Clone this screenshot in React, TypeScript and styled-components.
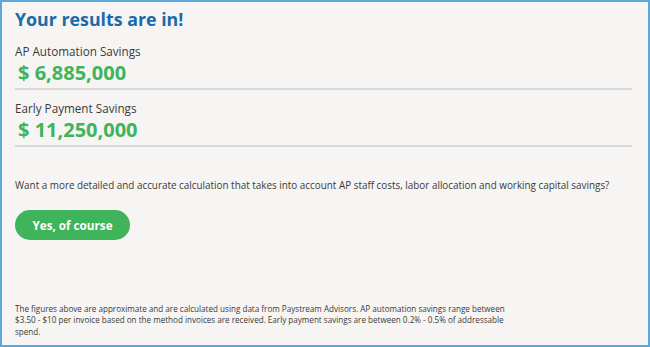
import styled, { createGlobalStyle } from "styled-components";

const colors = {
  FRAME: "#5aa8dc",
  BG: "#f6f5f3",
  TITLE: "#1b6aab",
  GREEN: "#3fb45a",
  TEXT: "#3a3a3a",
  RULE: "#d9d9d9",
};

const savings = [
  { label: "AP Automation Savings", amount: "$ 6,885,000" },
  { label: "Early Payment Savings", amount: "$ 11,250,000" },
];

const App = () => {
  return (
    <>
      <GlobalStyle />
      <Frame>
        <Title>Your results are in!</Title>
        {savings.map(item => (
          <SavingsRow key={item.label}>
            <SavingsLabel>{item.label}</SavingsLabel>
            <SavingsAmount>{item.amount}</SavingsAmount>
          </SavingsRow>
        ))}
        <Prompt>
          Want a more detailed and accurate calculation that takes into account AP staff costs, labor
          allocation and working capital savings?
        </Prompt>
        <CtaButton type="button">Yes, of course</CtaButton>
        <Footnote>
          The figures above are approximate and are calculated using data from Paystream Advisors. AP
          automation savings range between $3.50 - $10 per invoice based on the method invoices are
          received. Early payment savings are between 0.2% - 0.5% of addressable spend.
        </Footnote>
      </Frame>
    </>
  );
};

export default App;

const GlobalStyle = createGlobalStyle`
  html, body {
    margin: 0;
    padding: 0;
    background: ${colors.BG};
  }
  body {
    font-family: "Open Sans", "Liberation Sans", sans-serif;
  }
`;

const Frame = styled.div`
  width: 650px;
  height: 347px;
  box-sizing: border-box;
  border: 2px solid ${colors.FRAME};
  background: ${colors.BG};
  padding: 4px 16px 8px 13px;
  display: flex;
  flex-direction: column;
  align-items: stretch;
`;

const Title = styled.h1`
  margin: 0;
  font-size: 17.8px;
  line-height: 27px;
  font-weight: 700;
  color: ${colors.TITLE};
`;

const SavingsRow = styled.div`
  padding-top: 10px;
  padding-bottom: 3px;
  border-bottom: 2px solid ${colors.RULE};
  display: flex;
  flex-direction: column;
  row-gap: 1px;
`;

const SavingsLabel = styled.div`
  font-size: 11.7px;
  line-height: 17px;
  color: ${colors.TEXT};
`;

const SavingsAmount = styled.div`
  font-size: 20px;
  line-height: 24px;
  font-weight: 700;
  color: ${colors.GREEN};
  padding-left: 3px;
`;

const Prompt = styled.p`
  margin: 30px 0 0;
  font-size: 9.9px;
  line-height: 16px;
  color: ${colors.TEXT};
  white-space: nowrap;
`;

const CtaButton = styled.button`
  align-self: flex-start;
  margin-top: 17px;
  width: 115px;
  height: 30px;
  padding: 0;
  border: none;
  border-radius: 15px;
  background: ${colors.GREEN};
  color: #fff;
  font-family: inherit;
  font-size: 11.7px;
  font-weight: 700;
  cursor: pointer;
`;

const Footnote = styled.p`
  margin: auto 0 0;
  font-size: 8.1px;
  line-height: 11.5px;
  color: ${colors.TEXT};
  max-width: 495px;
`;
